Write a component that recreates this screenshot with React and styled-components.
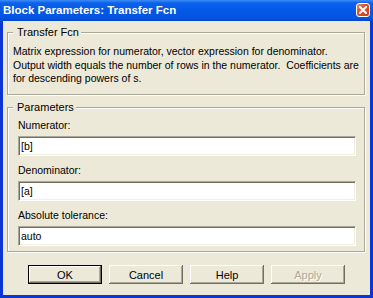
import React from 'react'
import styled, { createGlobalStyle, css } from 'styled-components'

const GlobalStyle = createGlobalStyle`
  html, body {
    margin: 0;
    padding: 0;
    background: #ece9d8;
  }
`

const FONT = `"Liberation Sans", Arial, sans-serif`

const Window = styled.div`
  width: 373px;
  height: 298px;
  display: flex;
  flex-direction: column;
  background: #0b35d6;
  box-sizing: border-box;
`

const TitleBar = styled.div`
  height: 21px;
  flex: none;
  display: flex;
  align-items: flex-start;
  justify-content: space-between;
  padding: 0 3px 0 3px;
  background: linear-gradient(180deg, #3d8df5 0px, #0a62ec 3px, #0459e6 10px, #0455e0 18px, #0246cb 21px);
`

const Title = styled.div`
  font-family: ${FONT};
  font-weight: bold;
  font-size: 11.5px;
  line-height: 21px;
  color: #fff;
  white-space: nowrap;
`

const CloseButton = styled.div`
  width: 14px;
  height: 14px;
  margin-top: 3px;
  box-sizing: border-box;
  border: 1px solid #fff;
  border-radius: 3px;
  background: linear-gradient(135deg, #ec8e72 0%, #e2552e 35%, #cf3c14 100%);
  display: flex;
  align-items: center;
  justify-content: center;
`

const Body = styled.div`
  flex: 1;
  margin: 0 3px 3px 3px;
  background: #ece9d8;
  display: flex;
  flex-direction: column;
  padding: 5px 5px 0 4px;
`

const Group = styled.fieldset`
  margin: 0 0 ${p => p.$gap || 0}px 0;
  padding: 0 0 ${p => p.$bottom}px 0;
  border: 1px solid #aca899;
  box-shadow: inset 1px 1px 0 #fff, 1px 1px 0 #fff;
  min-width: 0;
`

const Legend = styled.legend`
  font-family: ${FONT};
  font-size: 11px;
  line-height: 13px;
  color: #000;
  margin-left: 5px;
  padding: 0 2px 0 4px;
  background: #ece9d8;
`

const Description = styled.p`
  margin: 0;
  padding: 6px 5px 0 5px;
  font-family: ${FONT};
  font-size: 10.5px;
  line-height: 13.5px;
  color: #000;
  white-space: pre;
`

const FieldList = styled.div`
  display: flex;
  flex-direction: column;
  gap: 8px;
  padding: 5px 8px 0 10px;
`

const Field = styled.label`
  display: flex;
  flex-direction: column;
  gap: 4px;
`

const Label = styled.span`
  font-family: ${FONT};
  font-size: 10.5px;
  line-height: 13px;
  color: #000;
`

const TextBox = styled.input`
  height: 20px;
  box-sizing: border-box;
  margin: 0;
  padding: 0 2px;
  border: 1px solid;
  border-color: #aca899 #fff #fff #aca899;
  box-shadow: inset 1px 1px 0 #716f64, inset -1px -1px 0 #f1efe2;
  background: #fff;
  font-family: ${FONT};
  font-size: 10.5px;
  color: #000;
  outline: none;
`

const ButtonRow = styled.div`
  display: flex;
  justify-content: center;
  gap: 7px;
  margin-top: 13.5px;
  padding-left: 1px;
`

const Button = styled.button`
  width: 74px;
  height: 19px;
  padding: 0;
  border: none;
  background: #ece9d8;
  font-family: ${FONT};
  font-size: 11px;
  color: #000;
  box-shadow: inset -1px -1px 0 #716f64, inset 1px 1px 0 #fff, inset -2px -2px 0 #aca899;

  ${p => p.$default && css`
    box-shadow: inset 0 0 0 1px #000, inset -2px -2px 0 #716f64, inset 2px 2px 0 #fff, inset -3px -3px 0 #aca899;
  `}

  &:disabled {
    color: #aca899;
    text-shadow: 1px 1px 0 #fff;
  }
`

const fields = [
  { label: 'Numerator:', value: '[b]' },
  { label: 'Denominator:', value: '[a]' },
  { label: 'Absolute tolerance:', value: 'auto' },
]

export default function App() {
  return (
    <>
      <GlobalStyle />
      <Window>
        <TitleBar>
          <Title>Block Parameters: Transfer Fcn</Title>
          <CloseButton>
            <svg width="8" height="8" viewBox="0 0 8 8">
              <path d="M1 1L7 7M7 1L1 7" stroke="#fff" strokeWidth="2" strokeLinecap="square" />
            </svg>
          </CloseButton>
        </TitleBar>
        <Body>
          <Group $bottom={8} $gap={6}>
            <Legend>Transfer Fcn</Legend>
            <Description>
              {'Matrix expression for numerator, vector expression for denominator.\nOutput width equals the number of rows in the numerator.  Coefficients are\nfor descending powers of s.'}
            </Description>
          </Group>
          <Group $bottom={5}>
            <Legend>Parameters</Legend>
            <FieldList>
              {fields.map(f => (
                <Field key={f.label}>
                  <Label>{f.label}</Label>
                  <TextBox defaultValue={f.value} />
                </Field>
              ))}
            </FieldList>
          </Group>
          <ButtonRow>
            <Button $default>OK</Button>
            <Button>Cancel</Button>
            <Button>Help</Button>
            <Button disabled>Apply</Button>
          </ButtonRow>
        </Body>
      </Window>
    </>
  )
}
